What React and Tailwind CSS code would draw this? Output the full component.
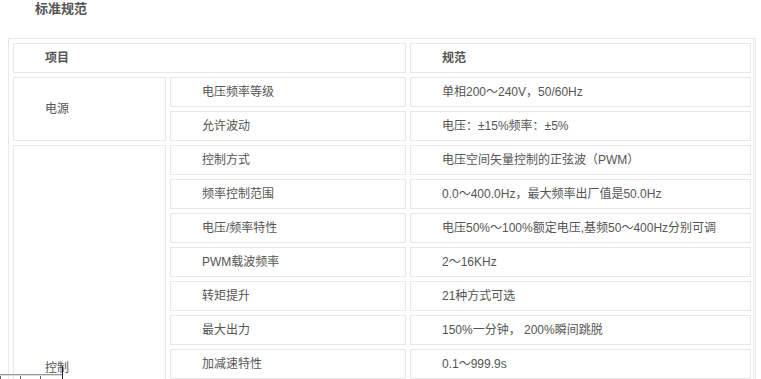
import React from "react";

const power = [
  ["电压频率等级", "单相200～240V，50/60Hz"],
  ["允许波动", "电压：±15%频率：±5%"],
];

const control = [
  ["控制方式", "电压空间矢量控制的正弦波（PWM）"],
  ["频率控制范围", "0.0～400.0Hz，最大频率出厂值是50.0Hz"],
  ["电压/频率特性", "电压50%～100%额定电压,基频50～400Hz分别可调"],
  ["PWM载波频率", "2～16KHz"],
  ["转矩提升", "21种方式可选"],
  ["最大出力", "150%一分钟， 200%瞬间跳脱"],
  ["加减速特性", "0.1～999.9s"],
  ["", ""],
  ["", ""],
  ["", ""],
  ["", ""],
  ["", ""],
  ["", ""],
];

const cell =
  "border border-[#e8e8e8] flex items-center pl-[31px] text-[12px] leading-[14px] text-[#555] whitespace-nowrap overflow-hidden";

export default function App() {
  return (
    <div className="relative min-h-[379px] bg-white font-['Liberation_Sans','Noto_Sans_CJK_SC',sans-serif]">
      <div className="h-[38px] pl-[35px] pt-[1px] text-[13px] leading-[16px] font-bold text-[#555]">
        标准规范
      </div>
      <div className="ml-[8px] w-[748px] border border-[#e8e8e8] shadow-[inset_-1px_0_0_#fff,inset_-2px_0_0_#e8e8e8] p-[4px] grid grid-cols-[153px_236px_341px] auto-rows-[30px] gap-[4px]">
        <div className={cell + " col-span-2 font-bold"}>项目</div>
        <div className={cell + " font-bold"}>规范</div>

        <div className={cell + " row-span-2"}>电源</div>
        <div className={cell}>{power[0][0]}</div>
        <div className={cell}>{power[0][1]}</div>
        <div className={cell}>{power[1][0]}</div>
        <div className={cell}>{power[1][1]}</div>

        <div className={cell + " row-span-13 pt-[7px]"}>控制</div>
        {control.map(([k, v], i) => (
          <React.Fragment key={i}>
            <div className={cell}>{k}</div>
            <div className={cell}>{v}</div>
          </React.Fragment>
        ))}
      </div>

      <div className="fixed left-0 top-[366px] w-[63px] h-[13px] pointer-events-none">
        <div className="flex h-full">
          <div className="w-[62px] flex flex-col">
            <div className="h-[8px]" />
            <div className="h-[2px] border-t border-[#999] border-b border-b-[#ddd]" />
            <div className="flex flex-1">
              <div className="w-[20px] border-l border-[#666]" />
              <div className="w-[20px] border-l border-[#666]" />
              <div className="w-[22px] border-l border-[#666]" />
            </div>
          </div>
          <div className="w-[1px] bg-[#222]" />
        </div>
      </div>
    </div>
  );
}
